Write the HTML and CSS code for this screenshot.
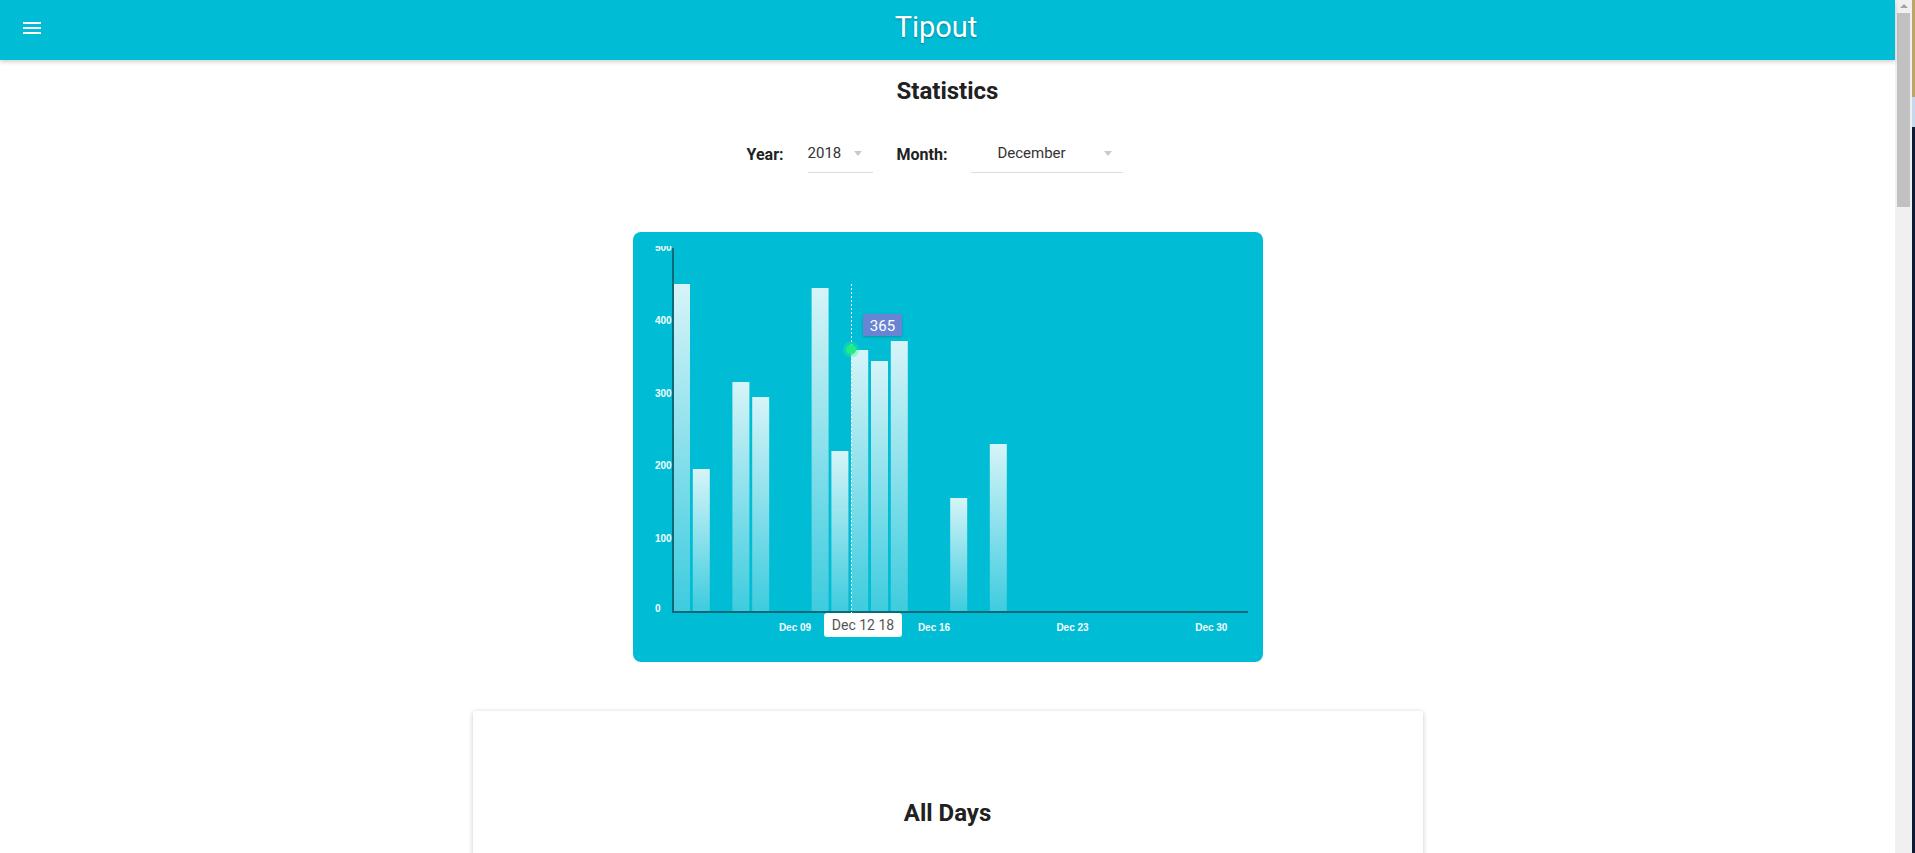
FILE: index.html
```html
<!DOCTYPE html>
<html lang="en">
<head>
<meta charset="utf-8">
<title>Tipout</title>
<link rel="stylesheet" href="styles.css">
</head>
<body>
<div class="window">
  <div class="app">
    <header class="appbar">
      <button class="menu-btn" aria-label="Menu">
        <svg viewBox="0 0 24 24" width="24" height="24"><path d="M3 18h18v-2H3v2zm0-5h18v-2H3v2zm0-7v2h18V6H3z" fill="#fff"/></svg>
      </button>
      <h1 class="appbar-title">Tipout</h1>
      <span class="appbar-spacer"></span>
    </header>
    <main class="content">
      <h2 class="page-title">Statistics</h2>
      <div class="filters">
        <span class="filter-label">Year:</span>
        <div class="select select-year"><span>2018</span><i class="caret"></i></div>
        <span class="filter-label">Month:</span>
        <div class="select select-month"><span>December</span><i class="caret"></i></div>
      </div>
      <section class="chart-card">
        <svg class="chart" width="630" height="430" viewBox="0 0 630 430">
          <defs>
            <linearGradient id="barFill" x1="0" y1="0" x2="0" y2="1">
              <stop offset="0" stop-color="#fff" stop-opacity="0.84"/>
              <stop offset="1" stop-color="#fff" stop-opacity="0.24"/>
            </linearGradient>
            <clipPath id="plotClip"><rect x="0" y="14" width="630" height="416"/></clipPath>
            <filter id="tipShadow" x="-20%" y="-20%" width="140%" height="160%">
              <feDropShadow dx="0" dy="1" stdDeviation="1" flood-color="#000" flood-opacity="0.2"/>
            </filter>
          </defs>
          <g class="ylabels" clip-path="url(#plotClip)">
            <text x="22" y="16">500</text>
            <text x="22" y="89">400</text>
            <text x="22" y="162">300</text>
            <text x="22" y="234">200</text>
            <text x="22" y="307">100</text>
            <text x="22" y="377">0</text>
          </g>
          <g class="bars" fill="url(#barFill)">
            <rect x="40" y="52" width="17" height="328"/>
            <rect x="59.8" y="237" width="17" height="143"/>
            <rect x="99.4" y="150" width="17" height="230"/>
            <rect x="119.2" y="165" width="17" height="215"/>
            <rect x="178.6" y="56" width="17" height="324"/>
            <rect x="198.4" y="219" width="17" height="161"/>
            <rect x="218.2" y="118" width="17" height="262"/>
            <rect x="238" y="129" width="17" height="251"/>
            <rect x="257.8" y="109" width="17" height="271"/>
            <rect x="317.2" y="266" width="17" height="114"/>
            <rect x="356.8" y="212" width="17" height="168"/>
          </g>
          <line x1="40" y1="16" x2="40" y2="381" class="axis"/>
          <line x1="39" y1="380" x2="615" y2="380" class="axis"/>
          <g class="xlabels">
            <text x="162" y="396">Dec 09</text>
            <text x="301" y="396">Dec 16</text>
            <text x="439.5" y="396">Dec 23</text>
            <text x="578.3" y="396">Dec 30</text>
          </g>
          <line x1="218.5" y1="52" x2="218.5" y2="381" class="crosshair"/>
          <circle cx="218" cy="117.5" r="8" fill="#2ef08a" opacity="0.35"/>
          <circle cx="218" cy="117.5" r="5" fill="#22ec86"/>
          <g filter="url(#tipShadow)">
            <rect x="230" y="82" width="39" height="22" rx="2" fill="#6a84d4"/>
          </g>
          <text x="249.5" y="98.5" class="tip-value">365</text>
          <rect x="191" y="381" width="78" height="24" rx="3" fill="#fff"/>
          <text x="230" y="397.5" class="tip-date">Dec 12 18</text>
        </svg>
      </section>
      <section class="card">
        <h2 class="card-title">All Days</h2>
      </section>
    </main>
  </div>
  <div class="scrollbar">
    <span class="scroll-arrow"></span>
    <span class="scroll-thumb"></span>
  </div>
  <div class="edge"></div>
</div>
</body>
</html>
```

FILE: styles.css
```css
html, body {
  margin: 0;
  height: 100%;
  overflow: hidden;
}

body {
  font-family: Roboto, "Noto Sans", sans-serif;
  background: #fff;
  color: #212121;
}

.window {
  display: flex;
  height: 853px;
}

.app {
  flex: 1;
  min-width: 0;
  display: flex;
  flex-direction: column;
}

.appbar {
  flex-shrink: 0;
  height: 60px;
  background: #00bcd4;
  display: flex;
  align-items: flex-start;
  box-shadow: 0 2px 4px rgba(0, 0, 0, 0.18);
  position: relative;
  z-index: 1;
}

.menu-btn {
  margin: 16px 0 0 20px;
  padding: 0;
  border: 0;
  background: none;
  width: 24px;
  height: 24px;
  display: block;
}

.menu-btn svg {
  display: block;
}

.appbar-title {
  flex: 1;
  margin: 0;
  text-align: center;
  font-weight: 400;
  font-size: 29px;
  line-height: 54px;
  color: #fff;
  text-shadow: 0 1px 2px rgba(0, 0, 0, 0.3);
}

.appbar-spacer {
  width: 67px;
  flex-shrink: 0;
}

.content {
  display: flex;
  flex-direction: column;
  align-items: center;
}

.page-title {
  margin: 17px 0 0;
  font-size: 24px;
  font-weight: 700;
  line-height: 28px;
  color: #212121;
}

.filters {
  display: flex;
  align-items: flex-start;
  gap: 24px;
  margin-top: 35px;
  padding-right: 25px;
}

.filter-label {
  font-size: 16px;
  font-weight: 700;
  line-height: 20px;
  padding-top: 5px;
  color: #212121;
}

.select {
  display: flex;
  justify-content: space-between;
  align-items: flex-start;
  box-sizing: border-box;
  height: 33px;
  padding: 3px 11px 9px 0;
  border-bottom: 1px solid #dcdcdc;
  font-size: 15px;
  line-height: 20px;
  color: #333;
}

.select-year {
  width: 65px;
}

.select-month {
  width: 152px;
  padding-left: 26px;
}

.caret {
  width: 0;
  height: 0;
  border-left: 4.5px solid transparent;
  border-right: 4.5px solid transparent;
  border-top: 5px solid #c9c9c9;
  margin-top: 8px;
}

.chart-card {
  flex-shrink: 0;
  margin-top: 59px;
  width: 630px;
  height: 430px;
  border-radius: 8px;
  background: #00bcd4;
  overflow: hidden;
}

.chart {
  display: block;
}

.ylabels text {
  font-family: "Liberation Sans", Arial, sans-serif;
  font-size: 10px;
  font-weight: 700;
  fill: #f4fdff;
  dominant-baseline: middle;
}

.xlabels text {
  font-family: "Liberation Sans", Arial, sans-serif;
  font-size: 10px;
  font-weight: 700;
  fill: #f4fdff;
  text-anchor: middle;
  dominant-baseline: middle;
}

.axis {
  stroke: #0b6a76;
  stroke-width: 2;
}

.crosshair {
  stroke: #fff;
  stroke-width: 1;
  stroke-dasharray: 2 2;
}

.tip-value {
  font-family: Roboto, sans-serif;
  font-size: 15px;
  fill: #fff;
  text-anchor: middle;
}

.tip-date {
  font-family: Roboto, sans-serif;
  font-size: 14px;
  fill: #555;
  text-anchor: middle;
}

.card {
  flex-shrink: 0;
  margin-top: 49px;
  width: 950px;
  min-height: 300px;
  box-shadow: 0 1px 5px rgba(0, 0, 0, 0.22);
  border-radius: 2px;
  padding-top: 88px;
  text-align: center;
}

.card-title {
  margin: 0;
  font-size: 24px;
  line-height: 28px;
  font-weight: 700;
  color: #212121;
}

.scrollbar {
  flex-shrink: 0;
  width: 17px;
  background: #f0f0f0;
  display: flex;
  flex-direction: column;
  align-items: center;
}

.scroll-arrow {
  margin-top: 4px;
  width: 0;
  height: 0;
  border-left: 4px solid transparent;
  border-right: 4px solid transparent;
  border-bottom: 4px solid #a3a3a3;
}

.scroll-thumb {
  margin-top: 5px;
  width: 13px;
  height: 194px;
  background: #c1c1c1;
}

.edge {
  flex-shrink: 0;
  width: 3px;
  background: linear-gradient(to bottom, #bfa36c 0, #bfa36c 97px, #c6d8ec 97px, #c6d8ec 127px, #0d1b34 127px);
}
```
